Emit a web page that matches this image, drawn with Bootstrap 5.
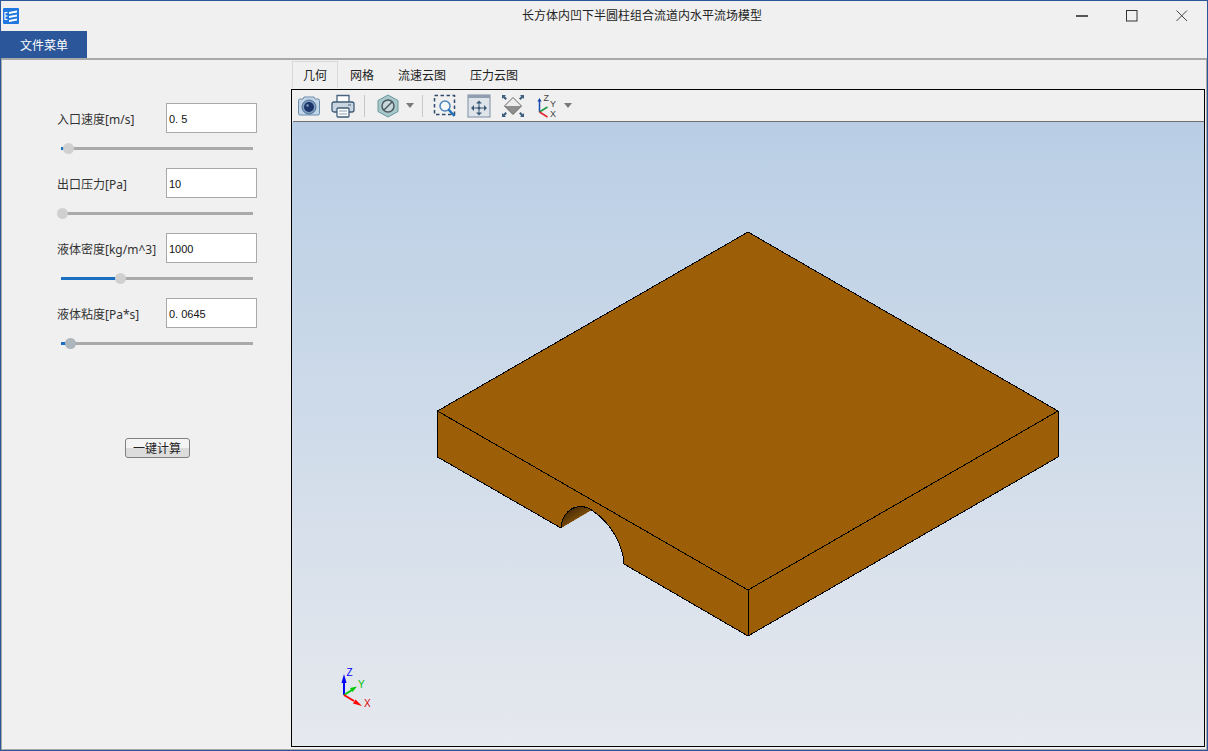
<!DOCTYPE html>
<html lang="zh-CN">
<head>
    <meta charset="UTF-8">
    <meta name="viewport" content="width=device-width, initial-scale=1.0">
    <title>长方体内凹下半圆柱组合流道内水平流场模型</title>
    <link rel="stylesheet" href="https://cdn.jsdelivr.net/npm/bootstrap@5.3.0/dist/css/bootstrap.min.css">
    <style>
        body {
            background-color: #f0f0f0;
            color: #333;
            font-family: "Noto Sans", "Noto Sans CJK SC", sans-serif;
            font-size: 12px;
            overflow: hidden;
        }
        .app-window {
            height: 751px;
            border: 1px solid #2b579a;
        }
        .title-bar { height: 30px; }
        .app-icon { margin-left: 2px; }
        .title-text { margin-left: 503px; color: #222; }
        .win-controls { gap: 38px; margin-right: 19px; }
        .menu-row { height: 27px; }
        .file-menu {
            width: 86px;
            padding-top: 2px;
            background-color: #2b579a;
            color: #fff;
        }
        .main-area {
            border: 1px solid #a9a9a9;
            border-top-width: 2px;
        }
        .side-panel {
            width: 289px;
            padding: 43px 0 0 55px;
        }
        .field-block { width: 200px; }
        .field-row { height: 30px; }
        .field-label { width: 109px; white-space: nowrap; }
        .field-input {
            width: 91px;
            height: 30px;
            padding: 1px 0 0 2px;
            border: 1px solid #a9a9a9;
            border-radius: 0;
            color: #111;
            font-family: "Liberation Sans", sans-serif;
            font-size: 11px;
        }
        .field-slider {
            display: block;
            width: 196px;
            height: 16px;
            margin: 7px 0 12px;
            padding: 0;
        }
        .field-slider::-webkit-slider-runnable-track {
            height: 3px;
            border-radius: 0;
            background: linear-gradient(to right, transparent 4px, #1a6fc0 4px, #1a6fc0 var(--fill), #aaa var(--fill));
        }
        .field-slider::-webkit-slider-thumb {
            width: 11px;
            height: 11px;
            margin-top: -4px;
            border-radius: 50%;
            background: #d0d0d0;
        }
        .field-slider.slider-hover::-webkit-slider-thumb { background: #adb5bd; }
        .calc-btn {
            display: block;
            width: 65px;
            height: 20px;
            margin: 87px auto 0;
            padding: 1px 0 0;
            border: 1px solid #808080;
            border-radius: 3px;
            background: linear-gradient(#f4f4f4 50%, #dcdcdc 50%);
            color: #222;
            font-size: 12px;
            line-height: 17px;
        }
        .right-pane { padding: 1px 1px 2px 0; }
        .view-tabs { height: 28px; margin-left: 1px; border-bottom: 0; }
        .view-tabs .nav-link {
            height: 27px;
            padding: 0 11px;
            margin: 0;
            border: 1px solid transparent;
            border-radius: 0;
            color: #222;
            line-height: 28px;
        }
        .view-tabs .nav-link.active {
            width: 46px;
            padding: 0 10px;
            border-color: #d9d9d9;
            border-bottom-color: #f0f0f0;
            background: #f0f0f0;
            color: #222;
        }
        .view-frame { border: 1px solid #000; min-height: 0; }
        .view-toolbar {
            height: 32px;
            margin-left: 1px;
            padding-left: 4px;
            gap: 10px;
            border-bottom: 1px solid #6f6f6f;
            background: #f0f0f0;
        }
        .tool-sep { width: 1px; height: 22px; margin-left: -1px; background: #c8c8c8; }
        .tool-nut { margin-left: 1px; }
        .tool-caret {
            width: 0;
            height: 0;
            margin: 0 -1px 0 -4px;
            border-style: solid;
            border-width: 5px 4px 0;
            border-color: #7a7a7a transparent transparent;
        }
        .tool-caret-end { margin-left: -5px; }
        .view-canvas {
            min-height: 0;
            background: linear-gradient(#b9cee5, #e6e9ee);
        }
        .view-canvas svg { display: block; width: 100%; height: 100%; }
        .axis-label { font-family: "Liberation Sans", sans-serif; font-size: 9px; }
        .triad-label { font-family: "Liberation Sans", sans-serif; font-size: 10px; }
    </style>
</head>
<body class="m-0">
<div class="app-window d-flex flex-column">
    <div class="title-bar d-flex align-items-center">
        <svg class="app-icon" width="16" height="16" viewBox="0 0 16 16">
            <rect width="16" height="16" rx="1" fill="#1f78e0"/>
            <path d="M2 4.500h2.500M2 8h2.500M2 11.500h2.500M2 4v8" stroke="#fff" stroke-width="1.200" fill="none"/>
            <path d="M6 4l8-1.500v2L6 6zM6 8l8-1.500v2L6 10zM6 12l8-1.500v2L6 14z" fill="#fff"/>
        </svg>
        <span class="title-text">长方体内凹下半圆柱组合流道内水平流场模型</span>
        <div class="win-controls d-flex align-items-center ms-auto">
            <svg width="12" height="12" viewBox="0 0 12 12"><path d="M0 6h12" stroke="#555" stroke-width="2"/></svg>
            <svg width="12" height="12" viewBox="0 0 12 12"><rect x=".5" y=".5" width="10.500" height="10.500" fill="none" stroke="#333"/></svg>
            <svg width="12" height="12" viewBox="0 0 12 12"><path d="M.5.5l10.500 10.500M11 .5L.5 11" stroke="#444" fill="none"/></svg>
        </div>
    </div>

    <div class="menu-row d-flex">
        <div class="file-menu d-flex align-items-center justify-content-center">文件菜单</div>
    </div>

    <div class="main-area d-flex flex-grow-1">
        <div class="side-panel flex-shrink-0">
            <div class="field-block" id="fields"></div>
        </div>

        <div class="right-pane d-flex flex-column flex-grow-1">
            <ul class="nav nav-tabs view-tabs flex-nowrap">
                <li class="nav-item"><a class="nav-link active" href="#">几何</a></li>
                <li class="nav-item"><a class="nav-link" href="#">网格</a></li>
                <li class="nav-item"><a class="nav-link" href="#">流速云图</a></li>
                <li class="nav-item"><a class="nav-link" href="#">压力云图</a></li>
            </ul>

            <div class="view-frame d-flex flex-column flex-grow-1">
                <div class="view-toolbar d-flex align-items-center flex-shrink-0">
                    <!-- camera -->
                    <svg width="24" height="24" viewBox="0 0 24 24">
                        <path d="M1.500 6.500q0-1.500 1.500-1.500h3l1-2h10l1 2h3q1.500 0 1.500 1.500v13q0 1.500-1.500 1.500h-18q-1.500 0-1.500-1.500z" fill="#c3d6e7" stroke="#6a8cab"/>
                        <circle cx="12" cy="13" r="7" fill="#7f9fc0" stroke="#4f7096"/>
                        <circle cx="12" cy="13" r="5" fill="#1b3468"/>
                        <circle cx="10.500" cy="11.500" r="1.200" fill="#7f9fc0"/>
                    </svg>
                    <!-- printer -->
                    <svg width="24" height="24" viewBox="0 0 24 24">
                        <path d="M6 9V1.500h12V9" fill="#fff" stroke="#47637f" stroke-width="1.300"/>
                        <rect x="1" y="8" width="22" height="10" rx="2" fill="#c9d5e0" stroke="#3f5b77" stroke-width="1.300"/>
                        <path d="M17 11h3" stroke="#47637f"/>
                        <rect x="6" y="14" width="12" height="9" rx="1" fill="#fff" stroke="#3f5b77" stroke-width="1.300"/>
                        <path d="M8 17h8M8 20h8" stroke="#8ba0b5"/>
                    </svg>
                    <div class="tool-sep"></div>
                    <!-- hidden / nut -->
                    <svg class="tool-nut" width="24" height="24" viewBox="0 0 24 24">
                        <path d="M12 1l10 5.500v11L12 23 2 17.500v-11z" fill="#a9c8ca" stroke="#68979d"/>
                        <circle cx="12" cy="12" r="6" fill="#c9d6da" stroke="#4a5a62" stroke-width="1.500"/>
                        <path d="M8 16l8-8" stroke="#4a5a62" stroke-width="1.500"/>
                    </svg>
                    <span class="tool-caret"></span>
                    <div class="tool-sep"></div>
                    <!-- zoom box -->
                    <svg width="24" height="24" viewBox="0 0 24 24">
                        <rect x="1.500" y="1.500" width="20" height="19" fill="none" stroke="#2f4a68" stroke-width="1.500" stroke-dasharray="3.500 2.500"/>
                        <circle cx="12" cy="12" r="5" fill="#f4f8fb" stroke="#4b86bd" stroke-width="1.500"/>
                        <path d="M15.500 15.500l6 6.500" stroke="#1f6fb8" stroke-width="2.400"/>
                    </svg>
                    <!-- pan -->
                    <svg width="24" height="24" viewBox="0 0 24 24">
                        <rect x="1" y="1" width="22" height="22" fill="#dfe4ea" stroke="#7d8ea2"/>
                        <rect x="1" y="1" width="22" height="3" fill="#8f9eb0"/>
                        <path d="M12 6.500l-3 3h6zM12 21.500l-3-3h6zM4 14l3-3v6zM20 14l-3-3v6z" fill="#3c5a78"/>
                        <path d="M12 9v10M6.500 14h11" stroke="#3c5a78"/>
                        <circle cx="12" cy="14" r="1.500" fill="#3c5a78"/>
                    </svg>
                    <!-- fit iso -->
                    <svg width="24" height="24" viewBox="0 0 24 24">
                        <path d="M12 3.500L20.500 12H3.500z" fill="#ececec"/>
                        <path d="M3.500 12h17L12 20.500z" fill="#8e8e8e"/>
                        <path d="M12 3.500L20.500 12 12 20.500 3.500 12z" fill="none" stroke="#666"/>
                        <path d="M1 1h4l-1.200 1.200L6 4.400 4.400 6 2.200 3.800 1 5zM23 1h-4l1.200 1.200L18 4.400 19.600 6l2.200-2.200L23 5zM1 23h4l-1.200-1.200L6 19.600 4.400 18l-2.200 2.200L1 19zM23 23h-4l1.200-1.200L18 19.600l1.600-1.600 2.200 2.200L23 19z" fill="#3f5f80"/>
                    </svg>
                    <!-- axes -->
                    <svg width="24" height="24" viewBox="0 0 24 24">
                        <path d="M4.500 18V6" stroke="#1c49b0" stroke-width="1.500"/>
                        <path d="M4.500 4l-2.200 3.500h4.400z" fill="#1c49b0"/>
                        <path d="M4.500 18l8-5" stroke="#1f9a3f" stroke-width="1.500"/>
                        <path d="M4.500 18l8 5" stroke="#e0262a" stroke-width="1.500"/>
                        <text x="8.500" y="7" class="axis-label" fill="#444">Z</text>
                        <text x="15" y="13" class="axis-label" fill="#444">Y</text>
                        <text x="15" y="23" class="axis-label" fill="#444">X</text>
                    </svg>
                    <span class="tool-caret tool-caret-end"></span>
                </div>

                <div class="view-canvas flex-grow-1">
                    <!-- model view, coordinates are page pixels -->
                    <svg viewBox="292 122 912 624" preserveAspectRatio="xMinYMin meet">
                        <defs>
                            <linearGradient id="grooveShade" x1="0" y1="0" x2="1" y2="1">
                                <stop offset="0" stop-color="#2a1a05"/>
                                <stop offset=".8" stop-color="#9c5f08"/>
                            </linearGradient>
                        </defs>
                        <path shape-rendering="crispEdges" fill="#9c5f08" d="M748 232L1058 411V457L748 636L624 564C622.500 540 607 520 591.500 510L561 528L437.500 457V411Z"/>
                        <path d="M561 528C562 514 571 506.500 581 506.500Q587 506.500 591.500 510Z" fill="url(#grooveShade)"/>
                        <g fill="none" stroke="#000" stroke-width="1" shape-rendering="crispEdges">
                            <path d="M437.500 411L748 232L1058 411L748 590Z"/>
                            <path d="M437.500 411V457L561 528M1058 411V457L748 636V590M748 636L624 564"/>
                            <path d="M561 528C562 514 571 506.500 581 506.500Q587 506.500 591.500 510C607 520 622.500 540 624 564"/>
                        </g>
                        <!-- axis triad -->
                        <path d="M344 695V680" stroke="#0000ff" stroke-width="2"/>
                        <path d="M344 674l-2.500 9h5z" fill="#0000ff"/>
                        <path d="M344 695l8-5" stroke="#00c800" stroke-width="2"/>
                        <path d="M357 686.500l-7 1.500 2.500 4z" fill="#00c800"/>
                        <path d="M344 695l10 6" stroke="#ff0000" stroke-width="2"/>
                        <path d="M362 706l-9-2.500 2.500-4z" fill="#ff0000"/>
                        <text x="346.500" y="675.500" class="triad-label" fill="#0000ff">Z</text>
                        <text x="358" y="688" class="triad-label" fill="#00c000">Y</text>
                        <text x="364" y="706.500" class="triad-label" fill="#e00000">X</text>
                    </svg>
                </div>
            </div>
        </div>
    </div>
</div>

<script src="https://cdn.jsdelivr.net/npm/bootstrap@5.3.0/dist/js/bootstrap.bundle.min.js"></script>
<script>
    const fields = [
        {label: "入口速度[m/s]", value: "0. 5", pos: 3},
        {label: "出口压力[Pa]", value: "10", pos: 0},
        {label: "液体密度[kg/m^3]", value: "1000", pos: 31.6},
        {label: "液体粘度[Pa*s]", value: "0. 0645", pos: 4.2, hover: true}
    ];

    let html = "";
    fields.forEach(f => {
        // track fill ends under the thumb centre
        let fill = (5.5 + f.pos / 100 * 185).toFixed(1);
        html += `
            <div class="field-row d-flex align-items-center">
                <label class="field-label pt-1">${f.label}</label>
                <input type="text" class="form-control field-input" value="${f.value}">
            </div>
            <input type="range" class="form-range field-slider ${f.hover ? "slider-hover" : ""}" min="0" max="100" step="0.1" value="${f.pos}" style="--fill: ${fill}px">
        `;
    });
    html += `<button type="button" class="btn calc-btn">一键计算</button>`;
    document.getElementById("fields").innerHTML = html;
</script>
</body>
</html>
